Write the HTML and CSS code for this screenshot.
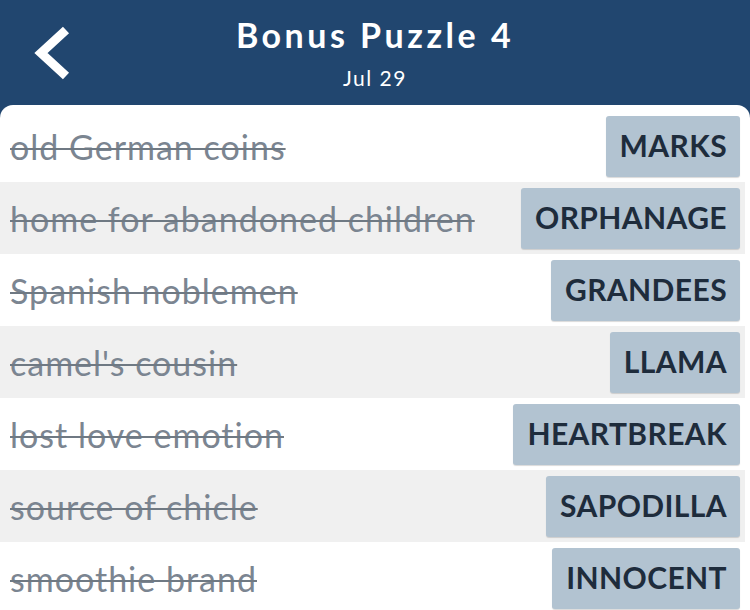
FILE: index.html
```html
<!DOCTYPE html>
<html lang="en">
<head>
    <meta charset="UTF-8">
    <meta name="viewport" content="width=device-width, initial-scale=1.0">
    <title>Bonus Puzzle 4</title>
    <link rel="stylesheet" href="styles.css">
</head>
<body>
    <header class="topbar">
        <button class="back-btn" aria-label="Back">
            <svg width="50" height="70" viewBox="0 0 50 70">
                <polyline points="42,8 17,31 42,54" fill="none" stroke="#ffffff" stroke-width="9" stroke-linejoin="miter" stroke-linecap="butt"/>
            </svg>
        </button>
        <div class="title-block">
            <h1 class="title">Bonus Puzzle 4</h1>
            <p class="date">Jul 29</p>
        </div>
    </header>

    <main class="card">
        <ul class="clue-list">
            <li class="clue-row"><span class="clue">old German coins</span><span class="answer">MARKS</span></li>
            <li class="clue-row"><span class="clue">home for abandoned children</span><span class="answer">ORPHANAGE</span></li>
            <li class="clue-row"><span class="clue">Spanish noblemen</span><span class="answer">GRANDEES</span></li>
            <li class="clue-row"><span class="clue">camel's cousin</span><span class="answer">LLAMA</span></li>
            <li class="clue-row"><span class="clue">lost love emotion</span><span class="answer">HEARTBREAK</span></li>
            <li class="clue-row"><span class="clue">source of chicle</span><span class="answer">SAPODILLA</span></li>
            <li class="clue-row"><span class="clue">smoothie brand</span><span class="answer">INNOCENT</span></li>
        </ul>
    </main>
</body>
</html>
```

FILE: styles.css
```css
body {
    margin: 0;
    background-color: #21466f;
    font-family: 'Lato', 'Noto Sans', sans-serif;
    overflow: hidden;
}
.topbar {
    height: 105px;
    position: relative;
    display: flex;
    justify-content: center;
    color: #ffffff;
}
.back-btn {
    position: absolute;
    left: 24px;
    top: 22px;
    background: none;
    border: none;
    padding: 0;
    cursor: pointer;
}
.title-block {
    text-align: center;
    padding-top: 14px;
}
.title {
    margin: 0;
    font-size: 34px;
    font-weight: bold;
    line-height: 42px;
    letter-spacing: 3.5px;
}
.date {
    margin: 10px 0 0 0;
    font-size: 21px;
    line-height: 24px;
    letter-spacing: 1.5px;
}
.card {
    background-color: #ffffff;
    border-radius: 13px 13px 0 0;
    padding-top: 5px;
    min-height: 520px;
}
.clue-list {
    list-style: none;
    margin: 0;
    padding: 0;
}
.clue-row {
    height: 72px;
    margin-right: 5px;
    padding: 0 5px 0 10px;
    display: flex;
    align-items: center;
    justify-content: space-between;
}
.clue-row:nth-child(even) {
    background-color: #f0f0f0;
}
.clue {
    font-size: 34px;
    letter-spacing: 1px;
    color: #7b8591;
    text-decoration: line-through;
    text-decoration-color: #6f7983;
    text-decoration-thickness: 2px;
    white-space: nowrap;
}
.answer {
    height: 61px;
    line-height: 59px;
    padding: 0 13px 0 14px;
    background-color: #b2c3d1;
    border-radius: 3px;
    box-shadow: 0 1px 1px rgba(0, 0, 0, 0.15);
    color: #1e2c3c;
    font-size: 30px;
    font-weight: bold;
    letter-spacing: 0.4px;
}
```
